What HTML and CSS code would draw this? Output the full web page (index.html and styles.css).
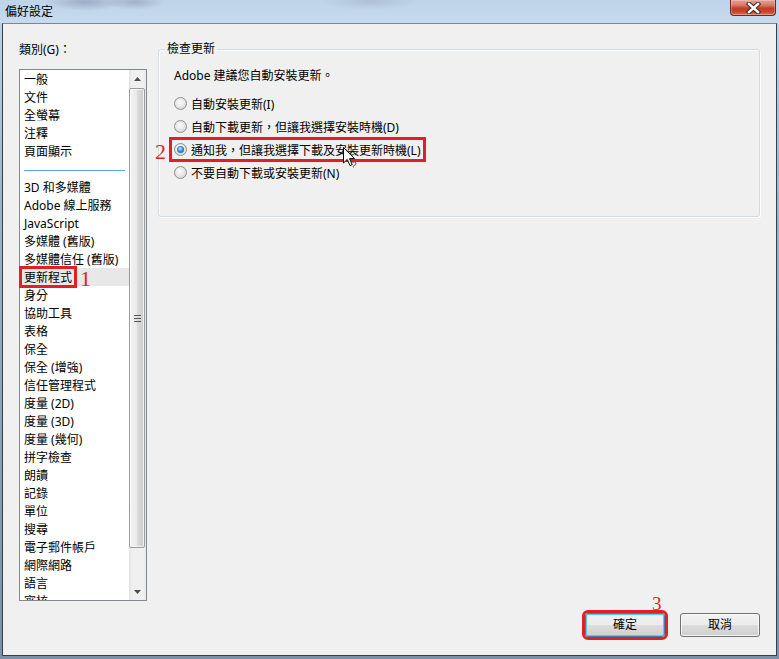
FILE: index.html
```html
<!DOCTYPE html>
<html lang="zh-Hant">
<head>
<meta charset="utf-8">
<title>偏好設定</title>
<link rel="stylesheet" href="styles.css">
</head>
<body>
<div class="window">
  <div class="titlebar">
    <span class="title">偏好設定</span>
    <div class="close">
      <svg width="15" height="12" viewBox="0 0 15 12">
        <path d="M3 2 L12 10 M12 2 L3 10" stroke="#3a2a2a" stroke-width="4.4" stroke-linecap="square"/>
        <path d="M3 2 L12 10 M12 2 L3 10" stroke="#ffffff" stroke-width="2.4" stroke-linecap="square"/>
      </svg>
    </div>
  </div>
  <div class="client">
    <div class="main">
      <div class="left">
        <div class="cat-label">類別(G)：</div>
        <div class="listbox">
          <ul class="list">
            <li>一般</li>
            <li>文件</li>
            <li>全螢幕</li>
            <li>注釋</li>
            <li>頁面顯示</li>
            <li class="sep"></li>
            <li>3D 和多媒體</li>
            <li>Adobe 線上服務</li>
            <li>JavaScript</li>
            <li>多媒體 (舊版)</li>
            <li>多媒體信任 (舊版)</li>
            <li class="selected">更新程式<span class="num n1">1</span></li>
            <li>身分</li>
            <li>協助工具</li>
            <li>表格</li>
            <li>保全</li>
            <li>保全 (增強)</li>
            <li>信任管理程式</li>
            <li>度量 (2D)</li>
            <li>度量 (3D)</li>
            <li>度量 (幾何)</li>
            <li>拼字檢查</li>
            <li>朗讀</li>
            <li>記錄</li>
            <li>單位</li>
            <li>搜尋</li>
            <li>電子郵件帳戶</li>
            <li>網際網路</li>
            <li>語言</li>
            <li>審核</li>
          </ul>
          <div class="scrollbar">
            <div class="sb-btn">
              <svg width="7" height="4" viewBox="0 0 7 4"><path d="M0 4 L3.5 0 L7 4 Z" fill="#4d4d4d"/></svg>
            </div>
            <div class="sb-track">
              <div class="thumb"><span class="grip"></span></div>
            </div>
            <div class="sb-btn">
              <svg width="7" height="4" viewBox="0 0 7 4"><path d="M0 0 L7 0 L3.5 4 Z" fill="#4d4d4d"/></svg>
            </div>
          </div>
        </div>
      </div>
      <fieldset class="group">
        <legend>檢查更新</legend>
        <div class="group-body">
          <p class="note">Adobe 建議您自動安裝更新。</p>
          <div class="opt"><span class="radio"></span>自動安裝更新(I)</div>
          <div class="opt"><span class="radio"></span>自動下載更新，但讓我選擇安裝時機(D)</div>
          <div class="opt marked"><span class="radio checked"></span>通知我，但讓我選擇下載及安裝更新時機(L)<span class="num n2">2</span>
            <svg class="cursor" width="16" height="22" viewBox="0 0 16 22">
              <path d="M0.5 0.5 L0.5 16 L4.2 12.4 L7 18.6 L9.2 17.6 L6.5 11.6 L11.5 11.6 Z" fill="#fff" stroke="#000" stroke-width="1"/>
              <path d="M9.5 15.5 Q12 14 13 16 Q13.5 18 11 18.5 Q9.5 19 10.5 20.5" fill="none" stroke="#555" stroke-width="1"/>
            </svg>
          </div>
          <div class="opt"><span class="radio"></span>不要自動下載或安裝更新(N)</div>
        </div>
      </fieldset>
    </div>
    <div class="footer">
      <button class="btn default">確定<span class="num n3">3</span></button>
      <button class="btn">取消</button>
    </div>
  </div>
</div>
</body>
</html>
```

FILE: styles.css
```css
html, body {
  margin: 0;
  padding: 0;
}

body {
  width: 779px;
  height: 659px;
  overflow: hidden;
  background: linear-gradient(to bottom, #c2d6ec 0px, #bcd1e8 23px, #9fb3c9 200px, #7d90a5 659px);
  font-family: "Noto Sans", "Noto Sans CJK TC", sans-serif;
  font-size: 12px;
  color: #000;
}

.window {
  display: flex;
  flex-direction: column;
  height: 659px;
}

.titlebar {
  height: 23px;
  display: flex;
  justify-content: space-between;
  align-items: flex-start;
  background:
    radial-gradient(ellipse 40px 9px at 85px 2px, rgba(110, 125, 150, 0.45), rgba(110, 125, 150, 0) 100%),
    radial-gradient(ellipse 30px 8px at 135px 2px, rgba(110, 125, 150, 0.4), rgba(110, 125, 150, 0) 100%),
    radial-gradient(ellipse 50px 9px at 370px 1px, rgba(130, 145, 170, 0.3), rgba(130, 145, 170, 0) 100%),
    linear-gradient(to bottom, #bfd4ea, #c7daee);
}

.title {
  padding-left: 5px;
  line-height: 23px;
  font-size: 12px;
  color: #000;
}

.close {
  width: 46px;
  height: 16px;
  margin-right: 3px;
  box-sizing: border-box;
  border: 1px solid #6b2b22;
  border-top: none;
  border-radius: 0 0 4px 4px;
  background: linear-gradient(to bottom, #e3a193 0%, #d77a66 35%, #c43c24 55%, #c7462f 80%, #d97a5f 100%);
  box-shadow: inset 0 0 0 1px rgba(255, 255, 255, 0.25);
  display: flex;
  align-items: center;
  justify-content: center;
}

.client {
  margin-left: 2px;
  width: 775px;
  height: 633px;
  box-sizing: border-box;
  border: 1px solid #36404a;
  border-top-color: #7a8896;
  background: #f0f0f0;
  padding: 16px 16px 18px;
  display: flex;
  flex-direction: column;
}

.main {
  flex: 1;
  display: grid;
  grid-template-columns: 128px 1fr;
  column-gap: 11px;
  align-items: start;
  min-height: 0;
}

.cat-label {
  line-height: 18px;
  padding-top: 1px;
  margin-bottom: 10px;
}

.listbox {
  height: 532px;
  box-sizing: border-box;
  border: 1px solid #828790;
  background: #fff;
  display: flex;
}

.list {
  flex: 1;
  list-style: none;
  margin: 0;
  padding: 0;
  overflow-x: visible;
  overflow-y: clip;
}

.list li {
  position: relative;
  height: 18px;
  box-sizing: border-box;
  padding-top: 1px;
  line-height: 18px;
  padding-left: 4px;
  white-space: nowrap;
}

.list li.sep {
  padding: 0;
}

.list li.sep::after {
  content: "";
  position: absolute;
  left: 4px;
  right: 4px;
  top: 10px;
  height: 1px;
  background: #59a4ec;
}

.list li.selected {
  background: #e8e8e8;
}

.list li.selected::before {
  content: "";
  position: absolute;
  left: -1px;
  top: -2px;
  width: 58px;
  height: 22px;
  box-sizing: border-box;
  border: 3px solid #e41e25;
}

.num {
  position: absolute;
  font-family: "Liberation Serif", serif;
  color: #e41e25;
  line-height: 1;
  font-weight: normal;
}

.n1 {
  font-size: 22px;
  left: 60px;
  top: 0;
}

.n2 {
  font-size: 22px;
  left: -19px;
  top: 3px;
}

.n3 {
  font-size: 19px;
  left: 66px;
  top: -20px;
}

.scrollbar {
  width: 17px;
  display: flex;
  flex-direction: column;
  background: linear-gradient(to right, #e2e2e2 0px, #efefef 3px, #f0f0f0 14px, #e8e8e8 17px);
}

.sb-btn {
  height: 17px;
  display: flex;
  align-items: center;
  justify-content: center;
}

.sb-track {
  flex: 1;
  padding: 1px 1px 0 0;
}

.thumb {
  height: 460px;
  box-sizing: border-box;
  border: 1px solid #9a9a9a;
  border-radius: 2px;
  background: linear-gradient(to right, #f2f2f2 0%, #ebebeb 45%, #d9d9d9 55%, #cdcdcd 100%);
  box-shadow: inset 0 0 0 1px rgba(255, 255, 255, 0.7);
  display: flex;
  align-items: center;
  justify-content: center;
}

.grip {
  width: 7px;
  height: 7px;
  background: repeating-linear-gradient(to bottom, #555 0px, #555 1px, #e0e0e0 1px, #e0e0e0 2px, transparent 2px, transparent 3px);
}

.group {
  margin: 0;
  padding: 0;
  min-width: 0;
  border: 1px solid #d2dbe2;
  border-radius: 3px;
  box-shadow: inset 1px 1px 0 #fff, 1px 1px 0 #fff;
}

.group legend {
  margin-left: 6px;
  padding: 0 2px;
  line-height: 18px;
}

.group-body {
  padding: 9px 14px 32px 15px;
}

.note {
  margin: 0 0 7px;
  line-height: 18px;
}

.opt {
  position: relative;
  display: flex;
  align-items: center;
  height: 23px;
  white-space: nowrap;
}

.opt.marked::before {
  content: "";
  position: absolute;
  left: -5px;
  top: -1px;
  width: 257px;
  height: 25px;
  box-sizing: border-box;
  border: 3px solid #e41e25;
}

.radio {
  width: 13px;
  height: 13px;
  box-sizing: border-box;
  margin-right: 4px;
  border-radius: 50%;
  border: 1px solid #8e8f8f;
  background: radial-gradient(circle at 45% 40%, #fbfbfb 0%, #e9e9e9 45%, #c9c9c9 100%);
  display: flex;
  align-items: center;
  justify-content: center;
  flex: none;
}

.radio.checked::after {
  content: "";
  width: 7px;
  height: 7px;
  border-radius: 50%;
  background: radial-gradient(circle at 45% 40%, #d9f0ff 0%, #3a8ad8 45%, #1a4f8f 100%);
}

.cursor {
  position: absolute;
  left: 169px;
  top: 9px;
}

.footer {
  margin-top: 12px;
  display: flex;
  justify-content: flex-end;
  gap: 15px;
}

.btn {
  position: relative;
  width: 80px;
  height: 24px;
  padding: 0;
  box-sizing: border-box;
  border: 1px solid #707070;
  border-radius: 3px;
  background: linear-gradient(to bottom, #f2f2f2 0%, #ebebeb 48%, #dddddd 52%, #cfcfcf 100%);
  box-shadow: inset 0 0 0 1px rgba(255, 255, 255, 0.75);
  font-family: "Noto Sans", "Noto Sans CJK TC", sans-serif;
  font-size: 12px;
  color: #000;
  line-height: 20px;
}

.btn.default {
  border-color: #3c7fb1;
  box-shadow: inset 0 0 0 1px #48d0f6;
  outline: 3px solid #e41e25;
  outline-offset: 0px;
}
```
